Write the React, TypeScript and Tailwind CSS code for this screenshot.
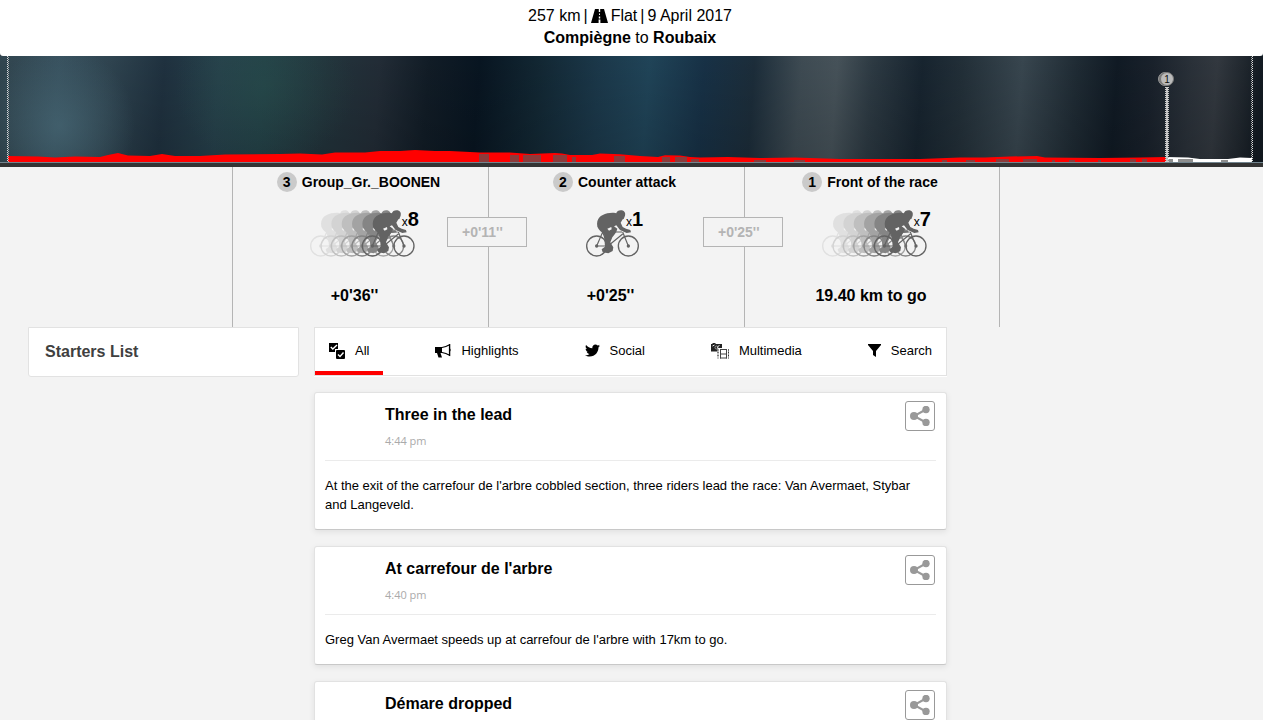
import { FaTwitter } from "react-icons/fa"

const groups = [
  { position: 3, name: "Group_Gr._BOONEN", riders: 8, info: "+0'36''", gap: "+0'11''" },
  { position: 2, name: "Counter attack", riders: 1, info: "+0'25''", gap: "+0'25''" },
  { position: 1, name: "Front of the race", riders: 7, info: "19.40 km to go", gap: null }
]

const tabs = [
  { label: "All", icon: AllIcon },
  { label: "Highlights", icon: MegaphoneIcon },
  { label: "Social", icon: SocialIcon },
  { label: "Multimedia", icon: MediaIcon },
  { label: "Search", icon: SearchIcon }
]

const posts = [
  {
    title: "Three in the lead",
    time: "4:44 pm",
    text: "At the exit of the carrefour de l'arbre cobbled section, three riders lead the race: Van Avermaet, Stybar and Langeveld."
  },
  {
    title: "At carrefour de l'arbre",
    time: "4:40 pm",
    text: "Greg Van Avermaet speeds up at carrefour de l'arbre with 17km to go."
  },
  { title: "Démare dropped", time: "", text: "" }
]

// cobbled sections: x, y, width
const cobblesDone = [
  [479, 98, 10], [510, 99, 9], [523, 99, 18], [553, 99, 14], [572, 101, 4],
  [614, 100, 11], [662, 101, 8], [675, 101, 12], [691, 103, 8], [754, 104, 12],
  [794, 104, 11], [942, 104, 5], [966, 104, 9], [996, 103, 13], [1023, 103, 14],
  [1052, 104, 3], [1069, 104, 6], [1098, 104, 3], [1130, 103, 6], [1142, 103, 5]
]
const cobblesAhead = [[1168, 103, 5], [1178, 103, 15], [1221, 104, 7]]

const skyStops = [
  [0, "#31454f"], [60, "#37505d"], [110, "#2f4450"], [165, "#1f313f"], [220, "#26404b"],
  [265, "#234047"], [330, "#22333b"], [380, "#222c36"], [430, "#111c26"], [480, "#081521"],
  [540, "#122733"], [600, "#1b384a"], [650, "#204458"], [705, "#173146"], [755, "#1c2d3a"],
  [802, "#3e4b53"], [838, "#465259"], [873, "#2d3a43"], [923, "#17242f"], [963, "#222f38"],
  [1023, "#38464f"], [1078, "#1f2b34"], [1118, "#101a24"], [1153, "#19212b"],
  [1193, "#2a3139"], [1218, "#32383f"], [1245, "#20272e"], [1263, "#121a22"]
] as const

function RoadIcon() {
  return (
    <svg width="17" height="14" viewBox="0 0 17 14" aria-hidden="true">
      <path d="M4 0h3.800v3h1.400V0H13l4 14H9.400V10.500H7.600V14H0z" />
      <path d="M8 4.500h1v1.500H8zM7.800 7.500h1.400V9.500H7.800z" fill="#fff" />
    </svg>
  )
}

function AllIcon() {
  return (
    <svg width="16" height="16" viewBox="0 0 16 16" aria-hidden="true">
      <path d="M0 0h9v6H6v3H0z" />
      <rect x="7" y="7" width="9" height="9" rx="1" />
      <path d="M1.800 4l2 2L8 2M9 11.500l2 2 3.500-4" fill="none" stroke="#fff" strokeWidth="1.400" />
    </svg>
  )
}

function MegaphoneIcon() {
  return (
    <svg width="16" height="14" viewBox="0 0 16 14" aria-hidden="true">
      <path d="M0 3h7v6H5.500L7 13.500H3.500L2 9H0z" />
      <path d="M7 3.500Q11 3 14.500.8V11.200Q11 9 7 8.500" fill="none" stroke="#000" strokeWidth="1.200" />
      <path d="M14 0h1.200v4.500q1 1.500 0 3V12H14z" />
    </svg>
  )
}

function SocialIcon() {
  return <FaTwitter size={15} aria-hidden="true" />
}

function MediaIcon() {
  return (
    <svg width="18" height="16" viewBox="0 0 18 16" aria-hidden="true">
      <path d="M0 1h1.500V0h3v1H11v4H7v3.500H0z" fill="#222" />
      <path d="M1.500 3l2-1M8.500 2.500L6 4l1 1" fill="none" stroke="#eee" />
      <circle cx="5.500" cy="4.500" r="1.500" fill="none" stroke="#999" />
      <rect x="6.500" y="5.500" width="11" height="10" fill="#fff" />
      <path d="M7 6v10M17.500 6v10" stroke="#999" />
      <path d="M7 6.500v1M7 9v1M7 12v1M17.500 6.500v1M17.500 9v1M17.500 12v1" stroke="#333" />
      <path d="M9.500 6v9.500M15.500 6v9.500M9 6.500h7M9 11h7M9 15h7" fill="none" stroke="#444" />
    </svg>
  )
}

function SearchIcon() {
  return (
    <svg width="13" height="13" viewBox="0 0 13 13" aria-hidden="true">
      <path d="M0 0h13v1L8 7v6L5 11V7L0 1z" />
    </svg>
  )
}

function ShareIcon() {
  return (
    <svg width="20" height="20" viewBox="0 0 20 20" fill="#999" aria-hidden="true">
      <path d="M16 3.500L4 10l12 6.500" fill="none" stroke="#999" strokeWidth="2" />
      <circle cx="4" cy="10" r="4" />
      <circle cx="16" cy="3.500" r="3.700" />
      <circle cx="16" cy="16.500" r="3.700" />
    </svg>
  )
}

function Rider({ x, color }: { x: number; color: string }) {
  return (
    <g transform={`translate(${x} 0)`} fill={color} stroke="none">
      <g fill="none" stroke={color} strokeWidth="4">
        <circle cx="32" cy="108" r="30" />
        <circle cx="127" cy="108" r="30" />
        <path d="M32 108L50 66H108M50 66L66 108L110 72M110 66L127 108M32 108H66" strokeWidth="3.500" />
      </g>
      <circle cx="32" cy="108" r="5" />
      <circle cx="127" cy="108" r="5" />
      <path d="M90 12C92 2 100 0 108 1C116 3 119 9 117 17L113 27L104 29L93 23z" />
      <path d="M34 50C30 26 44 15 64 10C78 7 88 8 96 12L110 28L104 38L110 51L120 56L133 60L135 67L122 69L102 60L91 46L84 49L94 56C92 68 83 76 79 82L73 97L82 112L80 123L67 130L50 127L47 118L57 110L54 72C47 66 38 60 34 50z" />
      <path d="M64 56L76 51L77 58L69 62z" fill="#f3f3f3" />
    </g>
  )
}

const packColors = ["#e0e0e0", "#d3d3d3", "#bfbfbf", "#a3a3a3", "#858585", "#636363"]

function Peloton({ riders }: { riders: number }) {
  const colors = riders > 1 ? packColors : packColors.slice(-1)
  const width = 159 + (colors.length - 1) * 31
  return (
    <svg height="47" viewBox={`0 0 ${width} 141`} aria-hidden="true">
      {colors.map((color, idx) => (
        <Rider key={color} x={idx * 31} color={color} />
      ))}
    </svg>
  )
}

function RaceProfile() {
  return (
    <svg viewBox="0 0 1263 111" preserveAspectRatio="none" className="block w-full h-[111px]" aria-label="Race profile">
      <defs>
        <linearGradient id="sky" x1="0" x2="1263" y1="0" y2="0" gradientUnits="userSpaceOnUse" gradientTransform="skewX(-4)">
          {skyStops.map(([x, color]) => (
            <stop key={x} offset={x / 1263} stopColor={color} />
          ))}
        </linearGradient>
        <linearGradient id="shade" x1="0" x2="0" y1="0" y2="1">
          <stop offset="0" stopColor="#000" stopOpacity="0" />
          <stop offset="1" stopColor="#000" stopOpacity="0.15" />
        </linearGradient>
        <radialGradient id="glow">
          <stop offset="0" stopColor="#4b6d7b" stopOpacity="0.6" />
          <stop offset="1" stopColor="#4b6d7b" stopOpacity="0" />
        </radialGradient>
        <radialGradient id="green">
          <stop offset="0" stopColor="#2b5650" stopOpacity="0.35" />
          <stop offset="1" stopColor="#2b5650" stopOpacity="0" />
        </radialGradient>
      </defs>
      <rect width="1263" height="107" fill="url(#sky)" />
      <rect width="1263" height="107" fill="url(#shade)" />
      <ellipse cx="60" cy="70" rx="75" ry="80" fill="url(#glow)" />
      <ellipse cx="265" cy="30" rx="90" ry="80" fill="url(#green)" />
      <path
        d="M8 106V100L38 100.500L55 101.500L75 100.500L100 101L108 99L118 97L128 99.500L150 100L162 98L175 100H200L225 98.500L280 98L300 97.500L322 98.500L335 96.500L365 96.500L380 95L400 95L415 94L435 95L450 95L480 96.500L510 96.500L530 98L555 97L562 97.500L570 99H592L600 97.500L620 98.300L640 100L658 101L665 99.300L680 99.500L690 101L700 101.500L728 101L760 102L795 101.500L840 103H920L960 101.500H985L1010 100.500L1037 100L1045 101.500L1100 102L1140 101.500L1166 101V106z"
        fill="#f00"
      />
      <path d="M1166 106V101L1188 101.500L1200 103H1228L1240 101.500L1252 102V106z" fill="#fff" />
      {cobblesDone.map(([x, y, width]) => (
        <rect key={x} x={x} y={y} width={width} height={106 - y} fill="#8c3b3b" />
      ))}
      {cobblesAhead.map(([x, y, width]) => (
        <rect key={x} x={x} y={y} width={width} height={106 - y} fill="#8e8e8e" />
      ))}
      <path d="M7.500 0V106M1252.500 0V106" stroke="#ddd" strokeDasharray="1 1" />
      <path d="M8.500 1V106M1251.500 1V106" stroke="#ddd" strokeDasharray="1 1" strokeOpacity="0.700" />
      <path d="M1167 31V106" stroke="#bbb" strokeWidth="2" />
      <path d="M1167 31V106" stroke="#ccc" strokeWidth="4" strokeDasharray="1 1" />
      <circle cx="1165" cy="23" r="6.500" fill="#777" stroke="#999" />
      <circle cx="1167" cy="23" r="6.500" fill="#bbb" stroke="#777" />
      <text x="1167" y="27" textAnchor="middle" fontSize="10" fill="#111">1</text>
      <rect y="106" width="1263" height="1" fill="#71848e" />
      <rect y="107" width="1263" height="4" fill="#343434" />
    </svg>
  )
}

export default function App() {
  return (
    <div className="min-h-screen bg-[#f3f3f3] text-black font-['Liberation_Sans',Arial,sans-serif]">
      <header className="bg-[#26323a]">
        <div className="bg-white rounded-b-[3px] pt-[5px] pb-[7px] pr-[3px] text-center text-base leading-[22px]">
          <p className="flex justify-center items-center gap-[3px]">
            <span>257 km</span>
            <span>|</span>
            <RoadIcon />
            <span>Flat</span>
            <span>|</span>
            <span>9 April 2017</span>
          </p>
          <p><strong>Compiègne</strong> to <strong>Roubaix</strong></p>
        </div>
        <RaceProfile />
      </header>

      <section className="flex justify-center pr-[31px]">
        {groups.map((group) => (
          <div key={group.position} className="relative w-64 h-40 border-l border-[#b4b4b4] last:border-r">
            <h2 className="flex justify-center items-center gap-[5px] pt-[5px] pr-1 text-sm leading-5 font-bold">
              <span className="w-5 h-5 rounded-full bg-[#cacaca] text-center">{group.position}</span>
              {group.name}
            </h2>
            <div className={group.riders > 1 ? "flex pt-[18px] pl-[77px]" : "flex pt-[18px] pl-[97px]"}>
              <div className="relative">
                <Peloton riders={group.riders} />
                <p className="absolute left-full -top-px -ml-[13px] text-xs leading-5 whitespace-nowrap">
                  x<strong className="text-xl leading-5">{group.riders}</strong>
                </p>
              </div>
            </div>
            <p className={group.gap ? "pt-[27px] pr-3 text-center font-bold leading-6" : "pt-[27px] pr-0.5 text-center font-bold leading-6"}>
              {group.info}
            </p>
            {group.gap && (
              <span className="absolute z-10 top-[50px] -right-[39px] w-20 h-[30px] pl-3.5 border border-[#b4b4b4] bg-[#f3f3f3] text-sm leading-7 font-bold text-[#b4b4b4]">
                {group.gap}
              </span>
            )}
          </div>
        ))}
      </section>

      <main className="grid grid-cols-[271px_1fr_273px] gap-[15px] items-start px-7">
        <aside className="h-[50px] px-4 bg-white border border-[#e2e2e2] rounded-b-[3px]">
          <h2 className="font-bold leading-[47px] text-[#404040]">Starters List</h2>
        </aside>

        <div>
          <nav className="flex justify-between h-[49px] bg-white border border-[#e2e2e2] shadow-[0_1px_0_#fff]">
            {tabs.map((tab, idx) => {
              const Icon = tab.icon
              return (
                <button
                  key={tab.label}
                  className={
                    idx === 0
                      ? "flex items-center gap-2.5 px-3.5 pt-0.5 border-b-4 border-[#f00] text-[13px]"
                      : "flex items-center gap-2.5 px-3.5 pt-0.5 border-b-4 border-transparent text-[13px]"
                  }
                >
                  <Icon />
                  {tab.label}
                </button>
              )
            })}
          </nav>

          <div className="flex flex-col gap-4 pt-4">
            {posts.map((post) => (
              <article
                key={post.title}
                className="px-2.5 bg-white border border-[#e2e2e2] border-b-[#c8c8c8] rounded-[3px] shadow-[0_2px_6px_rgba(0,0,0,0.08)]"
              >
                <div className="flex justify-between items-start h-[68px] pt-2 pr-px border-b border-[#ebebeb]">
                  <div className="pl-[60px]">
                    <h3 className="font-bold leading-7">{post.title}</h3>
                    <time className="block pt-0.5 text-[11px] leading-5 font-medium text-[#aaa] font-['Open_Sans',sans-serif]">{post.time}</time>
                  </div>
                  <button aria-label="Share" className="flex items-center justify-center size-[30px] border border-[#999] rounded-[3px]">
                    <ShareIcon />
                  </button>
                </div>
                <p className="py-[15px] pr-2.5 text-[13px] leading-[19px]">{post.text}</p>
              </article>
            ))}
          </div>
        </div>
      </main>
    </div>
  )
}
